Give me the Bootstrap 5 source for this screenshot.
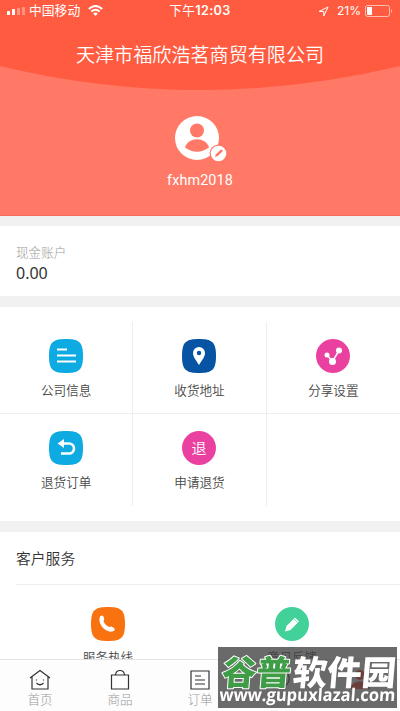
<!DOCTYPE html>
<html lang="zh-CN">
<head>
<meta charset="utf-8">
<meta name="viewport" content="width=device-width, initial-scale=1">
<title>我的</title>
<link href="https://cdn.jsdelivr.net/npm/bootstrap@5.3.0/dist/css/bootstrap.min.css" rel="stylesheet">
<style>
body{font-family:"Liberation Sans","Noto Sans CJK SC",sans-serif;background:#f1f1f1;width:400px;height:711px;overflow:hidden;color:#444;line-height:1}
svg{display:block;flex:none}
.hero{height:216px;background:#ff7966;border-bottom:1px solid #f36f5c}
.arc{top:0;left:0}
.status{height:22px;font-size:12.8px;padding:0 7px}
.status .side{width:140px}
.clock{font-family:Inter,"Noto Sans CJK SC",sans-serif;font-size:12.6px;letter-spacing:.4px}
.clock b{font-weight:600}
.power{font-family:Inter,sans-serif;font-size:12px}
.company{font-size:19.1px;height:68px;font-weight:350}
.avatar{margin-top:26px}
.user{font-size:14.4px;margin-top:12px;font-family:Roboto,sans-serif;letter-spacing:.1px}
.balance{margin-top:10px;height:70px;padding:21px 16px 0}
.balance .cap{font-size:12.6px;color:#999;font-weight:300}
.balance .sum{font-size:16px;font-family:"Noto Sans",sans-serif;margin-top:5px;color:#333}
.tiles{margin-top:11px;height:214px;padding-top:15px}
.tile{height:92px;padding-top:17px;font-size:12.6px;border-right:1px solid #eee;border-bottom:1px solid #eee;gap:12px;color:#484848;font-weight:350}
.tile:nth-child(3n){border-right:0}
.tile:nth-child(n+4){border-bottom:0}
.service{margin-top:11px;height:200px}
.service h2{font-size:14.8px;line-height:1;height:53px;padding-top:2px;margin-left:16px;border-bottom:1px solid #eee;font-weight:350;color:#333}
.help{font-size:12.6px;padding-top:22px;gap:11px;color:#484848;font-weight:350}
.tabs{height:52px;background:#fdfdfd;border-top:1px solid #e4e4e4;font-size:12.6px;color:#999;font-weight:300}
.tab-cell{padding-top:9px;gap:4px;width:80px}
.stamp{left:218px;top:647px;width:179px;height:61px;background:rgba(64,64,64,.78);z-index:1040}
.stamp svg text{font-family:"Noto Sans CJK SC",sans-serif;font-weight:900}
.stamp svg .url{font-family:"Open Sans","Liberation Sans",sans-serif;font-weight:700}
</style>
<script src="https://cdn.jsdelivr.net/npm/bootstrap@5.3.0/dist/js/bootstrap.bundle.min.js"></script>
</head>
<body class="position-relative">
<header class="hero position-relative text-white">
  <svg class="arc position-absolute" width="400" height="100"><path d="M0 0H400V66Q200 114 0 66Z" fill="#ff5b40"/></svg>
  <div class="position-relative">
    <div class="status d-flex align-items-center justify-content-between">
      <div class="side d-flex align-items-center">
        <svg width="18" height="8"><g fill="#fff"><rect y="4" width="3" height="4" rx=".6"/><rect x="5" y="2" width="3" height="6" rx=".6"/><rect x="10" y="1" width="3" height="7" rx=".6" opacity=".35"/><rect x="15" width="3" height="8" rx=".6" opacity=".35"/></g></svg>
        <span class="ms-1">中国移动</span>
        <svg class="ms-2" width="15" height="11" viewBox="0 0 15 11" fill="none" stroke="#fff" stroke-width="2"><path d="M.8 4Q7.500-2 14.200 4M3.300 6.600Q7.500 3 11.700 6.600"/><path d="M5.200 8.500Q7.500 6.700 9.800 8.500L7.500 11Z" fill="#fff" stroke="none"/></svg>
      </div>
      <span class="clock">下午<b>12:03</b></span>
      <div class="side d-flex align-items-center justify-content-end">
        <svg width="11" height="11" viewBox="0 0 11 11"><path d="M1 5.500L10 1 5.800 10V5.500Z" fill="none" stroke="#fff"/></svg>
        <span class="power mx-1 ps-1">21%</span>
        <svg width="28" height="12"><rect x=".5" y=".5" width="24" height="11" rx="2" fill="none" stroke="#fff" opacity=".6"/><rect x="2" y="2" width="5" height="8" fill="#fff"/><path d="M26 4q2 2 0 4z" fill="#fff" opacity=".6"/></svg>
      </div>
    </div>
    <div class="company d-flex align-items-center justify-content-center">天津市福欣浩茗商贸有限公司</div>
    <div class="d-flex flex-column align-items-center">
      <svg class="avatar" width="62" height="46" viewBox="0 0 62 46"><circle cx="28" cy="22" r="22" fill="#fff"/><circle cx="28" cy="14.500" r="7" fill="#ff7966"/><path d="M16 31.500C19 20.500 37 20.500 40 31.500Q28 40 16 31.500Z" fill="#ff7966"/><circle cx="49.500" cy="37.500" r="9" fill="#ff7966"/><circle cx="49.500" cy="37.500" r="7.800" fill="#fff"/><path d="M46 41l1-2.800 5.200-5 1.800 1.800-5.200 5z" fill="#ff7966"/></svg>
      <div class="user">fxhm2018</div>
    </div>
  </div>
</header>
<section class="balance bg-white">
  <div class="cap">现金账户</div>
  <div class="sum">0.00</div>
</section>
<section class="tiles bg-white">
  <div class="row g-0">
    <div class="tile col-4 d-flex flex-column align-items-center"><svg width="34" height="34" viewBox="0 0 34 34"><path d="M17 0C30 0 34 3 34 17S30 34 17 34 0 31 0 17 4 0 17 0Z" fill="#0eaae2"/><path d="M8 10.500H18M8 16.500H27M8 22.500H27" stroke="#fff" stroke-width="2"/></svg><span>公司信息</span></div>
    <div class="tile col-4 d-flex flex-column align-items-center"><svg width="34" height="34" viewBox="0 0 34 34"><path d="M17 0C30 0 34 3 34 17S30 34 17 34 0 31 0 17 4 0 17 0Z" fill="#0754a5"/><path d="M17 26C14 21 11 18 11 14a6 6 0 0 1 12 0C23 18 20 21 17 26Z" fill="#fff"/><circle cx="17" cy="14" r="2.200" fill="#0754a5"/></svg><span>收货地址</span></div>
    <div class="tile col-4 d-flex flex-column align-items-center"><svg width="34" height="34" viewBox="0 0 34 34"><circle cx="17" cy="17" r="17" fill="#ea41a0"/><path d="M11 16l5.500 6.500L23 11.500" fill="none" stroke="#fff" stroke-width="1.500"/><g fill="#fff"><circle cx="11" cy="16" r="2.500"/><circle cx="16.500" cy="22.500" r="3.500"/><circle cx="23" cy="11.500" r="3"/></g></svg><span>分享设置</span></div>
    <div class="tile col-4 d-flex flex-column align-items-center"><svg width="34" height="34" viewBox="0 0 34 34"><path d="M17 0C30 0 34 3 34 17S30 34 17 34 0 31 0 17 4 0 17 0Z" fill="#0eaae2"/><path d="M12 12.500H20a5 5 0 0 1 0 10H12" fill="none" stroke="#fff" stroke-width="2.600"/><path d="M8.500 12.500L15 8V17Z" fill="#fff"/></svg><span>退货订单</span></div>
    <div class="tile col-4 d-flex flex-column align-items-center"><svg width="34" height="34" viewBox="0 0 34 34"><circle cx="17" cy="17" r="17" fill="#ea41a0"/><text x="17" y="22.500" font-size="15" text-anchor="middle" fill="#fff">退</text></svg><span>申请退货</span></div>
    <div class="tile col-4"></div>
  </div>
</section>
<section class="service bg-white">
  <h2 class="d-flex align-items-center mb-0">客户服务</h2>
  <div class="d-flex px-3">
    <div class="help col-6 d-flex flex-column align-items-center"><svg width="34" height="34" viewBox="0 0 34 34"><path d="M17 0C30 0 34 3 34 17S30 34 17 34 0 31 0 17 4 0 17 0Z" fill="#f8730f"/><path d="M9 9.500Q12 7 13 11 13.500 13 12.500 14 14 18.500 18.500 20 20 18.500 23 21 25 23 21.500 24.500C15 26 6 17 9 9.500Z" fill="#fff"/></svg><span>服务热线</span></div>
    <div class="help col-6 d-flex flex-column align-items-center"><svg width="34" height="34" viewBox="0 0 34 34"><circle cx="17" cy="17" r="17" fill="#42d198"/><path d="M10 24.500L11.500 19 20 10.500 24 14.500 15.500 23Z" fill="#fff"/><path d="M18.800 11.700L22.800 15.700" stroke="#42d198" stroke-width=".7"/></svg><span>意见反馈</span></div>
  </div>
</section>
<nav class="tabs fixed-bottom d-flex">
  <div class="tab-cell d-flex flex-column align-items-center"><svg width="22" height="21" viewBox="0 0 22 21" fill="none" stroke="#333" stroke-width="1.200"><path d="M1 9L11 1.500 21 9M3 8V20H19V8"/><path d="M7.500 14q3.500 3.500 7 0"/><path d="M7.500 10.500v1M14.500 10.500v1"/></svg><span>首页</span></div>
  <div class="tab-cell d-flex flex-column align-items-center"><svg width="20" height="21" viewBox="0 0 20 21" fill="none" stroke="#333" stroke-width="1.200"><path d="M1.500 6H18.500V20H1.500ZM5.500 6C6 0 14 0 14.500 6"/></svg><span>商品</span></div>
  <div class="tab-cell d-flex flex-column align-items-center"><svg width="20" height="21" viewBox="0 0 20 21" fill="none" stroke="#333" stroke-width="1.200"><path d="M1 2H19V20H1ZM5 7H11M5 11H15M5 15H15"/></svg><span>订单</span></div>
  <div class="tab-cell d-flex flex-column align-items-center"><svg width="20" height="21" viewBox="0 0 20 21" fill="none" stroke="#333" stroke-width="1.200"><path d="M4 19l1-3A8.500 8.500 0 1 1 9 18Z"/></svg></div>
  <div class="tab-cell d-flex flex-column align-items-center"><svg width="20" height="21" viewBox="0 0 20 21" fill="#ff3b20"><circle cx="10" cy="6" r="5"/><path d="M0 20C1 10 19 10 20 20Z"/></svg></div>
</nav>
<div class="stamp position-absolute">
  <svg width="179" height="61"><g font-size="34" stroke-linejoin="round" paint-order="stroke"><text transform="translate(3 38) skewX(-5)" textLength="69" lengthAdjust="spacingAndGlyphs" fill="#3f9c47" stroke="#fff" stroke-width="2">谷普</text><text transform="translate(74 38) skewX(-5)" textLength="103" lengthAdjust="spacingAndGlyphs" fill="#fff">软件园</text></g><text class="url" transform="translate(1 54) skewX(-4)" font-size="17.500" textLength="176" lengthAdjust="spacingAndGlyphs" fill="#fff">www.gupuxlazal.com</text></svg>
</div>
</body>
</html>
